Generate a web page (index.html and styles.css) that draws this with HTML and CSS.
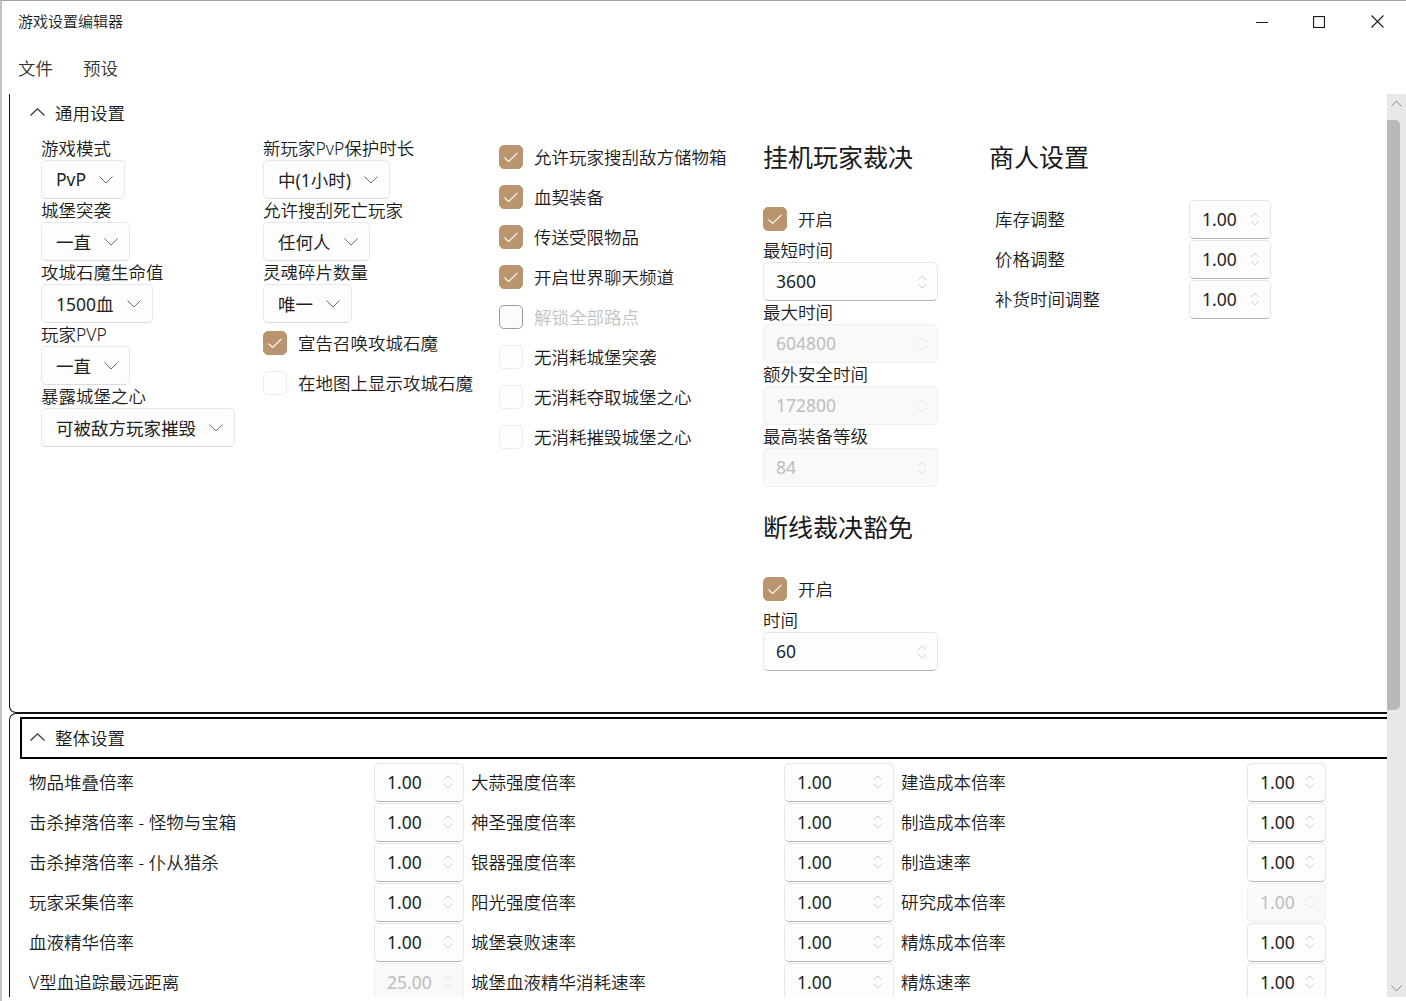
FILE: index.html
```html
<!DOCTYPE html>
<html lang="zh-CN">
<head>
<meta charset="utf-8">
<title>游戏设置编辑器</title>
<link rel="stylesheet" href="styles.css">
</head>
<body>
<div class="window">
  <header class="titlebar">
    <div class="title">游戏设置编辑器</div>
    <div class="controls">
      <div class="ctl"><svg width="12" height="12" viewBox="0 0 12 12"><path d="M0 6.5H12" stroke="#1a1a1a" stroke-width="1"/></svg></div>
      <div class="ctl"><svg width="12" height="12" viewBox="0 0 12 12"><rect x="0.5" y="0.5" width="11" height="11" fill="none" stroke="#1a1a1a" stroke-width="1.2"/></svg></div>
      <div class="ctl"><svg width="13" height="13" viewBox="0 0 13 13"><path d="M0.5 0.5L12.5 12.5M12.5 0.5L0.5 12.5" stroke="#1a1a1a" stroke-width="1.1"/></svg></div>
    </div>
  </header>
  <nav class="menubar"><span class="menu">文件</span><span class="menu">预设</span></nav>
  <div class="content">
    <div class="viewport">
      <section class="expander first">
        <div class="exp-header">
          <svg class="caret" width="15" height="8" viewBox="0 0 15 8"><path d="M0.5 7.5L7.5 0.8L14.5 7.5" fill="none" stroke="#333" stroke-width="1.2"/></svg>
          <span>通用设置</span>
        </div>
        <div class="general">
          <div class="col c1">
            <div class="label">游戏模式</div>
            <div class="combo"><span>PvP</span><svg class="chev" width="14" height="8" viewBox="0 0 14 8"><path d="M0.5 0.5L7 7L13.5 0.5" fill="none" stroke="#6b6b6b" stroke-width="1"/></svg></div>
            <div class="label">城堡突袭</div>
            <div class="combo"><span>一直</span><svg class="chev" width="14" height="8" viewBox="0 0 14 8"><path d="M0.5 0.5L7 7L13.5 0.5" fill="none" stroke="#6b6b6b" stroke-width="1"/></svg></div>
            <div class="label">攻城石魔生命值</div>
            <div class="combo"><span>1500血</span><svg class="chev" width="14" height="8" viewBox="0 0 14 8"><path d="M0.5 0.5L7 7L13.5 0.5" fill="none" stroke="#6b6b6b" stroke-width="1"/></svg></div>
            <div class="label">玩家PVP</div>
            <div class="combo"><span>一直</span><svg class="chev" width="14" height="8" viewBox="0 0 14 8"><path d="M0.5 0.5L7 7L13.5 0.5" fill="none" stroke="#6b6b6b" stroke-width="1"/></svg></div>
            <div class="label">暴露城堡之心</div>
            <div class="combo"><span>可被敌方玩家摧毁</span><svg class="chev" width="14" height="8" viewBox="0 0 14 8"><path d="M0.5 0.5L7 7L13.5 0.5" fill="none" stroke="#6b6b6b" stroke-width="1"/></svg></div>
          </div>
          <div class="col c2">
            <div class="label">新玩家PvP保护时长</div>
            <div class="combo"><span>中(1小时)</span><svg class="chev" width="14" height="8" viewBox="0 0 14 8"><path d="M0.5 0.5L7 7L13.5 0.5" fill="none" stroke="#6b6b6b" stroke-width="1"/></svg></div>
            <div class="label">允许搜刮死亡玩家</div>
            <div class="combo"><span>任何人</span><svg class="chev" width="14" height="8" viewBox="0 0 14 8"><path d="M0.5 0.5L7 7L13.5 0.5" fill="none" stroke="#6b6b6b" stroke-width="1"/></svg></div>
            <div class="label">灵魂碎片数量</div>
            <div class="combo"><span>唯一</span><svg class="chev" width="14" height="8" viewBox="0 0 14 8"><path d="M0.5 0.5L7 7L13.5 0.5" fill="none" stroke="#6b6b6b" stroke-width="1"/></svg></div>
            <div class="check"><span class="box on"><svg width="24" height="24" viewBox="0 0 24 24"><path d="M5.5 12.5L9.6 16.4L18.5 7.8" fill="none" stroke="#fff" stroke-width="1.1"/></svg></span><span>宣告召唤攻城石魔</span></div>
            <div class="check"><span class="box"></span><span>在地图上显示攻城石魔</span></div>
          </div>
          <div class="col c3">
            <div class="check"><span class="box on"><svg width="24" height="24" viewBox="0 0 24 24"><path d="M5.5 12.5L9.6 16.4L18.5 7.8" fill="none" stroke="#fff" stroke-width="1.1"/></svg></span><span>允许玩家搜刮敌方储物箱</span></div>
            <div class="check"><span class="box on"><svg width="24" height="24" viewBox="0 0 24 24"><path d="M5.5 12.5L9.6 16.4L18.5 7.8" fill="none" stroke="#fff" stroke-width="1.1"/></svg></span><span>血契装备</span></div>
            <div class="check"><span class="box on"><svg width="24" height="24" viewBox="0 0 24 24"><path d="M5.5 12.5L9.6 16.4L18.5 7.8" fill="none" stroke="#fff" stroke-width="1.1"/></svg></span><span>传送受限物品</span></div>
            <div class="check"><span class="box on"><svg width="24" height="24" viewBox="0 0 24 24"><path d="M5.5 12.5L9.6 16.4L18.5 7.8" fill="none" stroke="#fff" stroke-width="1.1"/></svg></span><span>开启世界聊天频道</span></div>
            <div class="check dim"><span class="box grey"></span><span>解锁全部路点</span></div>
            <div class="check"><span class="box"></span><span>无消耗城堡突袭</span></div>
            <div class="check"><span class="box"></span><span>无消耗夺取城堡之心</span></div>
            <div class="check"><span class="box"></span><span>无消耗摧毁城堡之心</span></div>
          </div>
          <div class="col c4">
            <h2 class="heading">挂机玩家裁决</h2>
            <div class="check"><span class="box on"><svg width="24" height="24" viewBox="0 0 24 24"><path d="M5.5 12.5L9.6 16.4L18.5 7.8" fill="none" stroke="#fff" stroke-width="1.1"/></svg></span><span>开启</span></div>
            <div class="label">最短时间</div>
            <div class="num wide"><span>3600</span><svg class="spin" width="10" height="16" viewBox="0 0 10 16"><path d="M1 6L5 2L9 6M1 10L5 14L9 10" fill="none" stroke-width="1"/></svg></div>
            <div class="label">最大时间</div>
            <div class="num wide dis"><span>604800</span><svg class="spin" width="10" height="16" viewBox="0 0 10 16"><path d="M1 6L5 2L9 6M1 10L5 14L9 10" fill="none" stroke-width="1"/></svg></div>
            <div class="label">额外安全时间</div>
            <div class="num wide dis"><span>172800</span><svg class="spin" width="10" height="16" viewBox="0 0 10 16"><path d="M1 6L5 2L9 6M1 10L5 14L9 10" fill="none" stroke-width="1"/></svg></div>
            <div class="label">最高装备等级</div>
            <div class="num wide dis"><span>84</span><svg class="spin" width="10" height="16" viewBox="0 0 10 16"><path d="M1 6L5 2L9 6M1 10L5 14L9 10" fill="none" stroke-width="1"/></svg></div>
            <h2 class="heading second">断线裁决豁免</h2>
            <div class="check"><span class="box on"><svg width="24" height="24" viewBox="0 0 24 24"><path d="M5.5 12.5L9.6 16.4L18.5 7.8" fill="none" stroke="#fff" stroke-width="1.1"/></svg></span><span>开启</span></div>
            <div class="label">时间</div>
            <div class="num wide"><span>60</span><svg class="spin" width="10" height="16" viewBox="0 0 10 16"><path d="M1 6L5 2L9 6M1 10L5 14L9 10" fill="none" stroke-width="1"/></svg></div>
          </div>
          <div class="col c5">
            <h2 class="heading">商人设置</h2>
            <div class="mrow"><span class="mlabel">库存调整</span><div class="num merch"><span>1.00</span><svg class="spin" width="10" height="16" viewBox="0 0 10 16"><path d="M1 6L5 2L9 6M1 10L5 14L9 10" fill="none" stroke-width="1"/></svg></div></div>
            <div class="mrow"><span class="mlabel">价格调整</span><div class="num merch"><span>1.00</span><svg class="spin" width="10" height="16" viewBox="0 0 10 16"><path d="M1 6L5 2L9 6M1 10L5 14L9 10" fill="none" stroke-width="1"/></svg></div></div>
            <div class="mrow"><span class="mlabel">补货时间调整</span><div class="num merch"><span>1.00</span><svg class="spin" width="10" height="16" viewBox="0 0 10 16"><path d="M1 6L5 2L9 6M1 10L5 14L9 10" fill="none" stroke-width="1"/></svg></div></div>
          </div>
        </div>
      </section>
      <section class="expander second">
        <div class="exp-header focus">
          <svg class="caret" width="15" height="8" viewBox="0 0 15 8"><path d="M0.5 7.5L7.5 0.8L14.5 7.5" fill="none" stroke="#333" stroke-width="1.2"/></svg>
          <span>整体设置</span>
        </div>
        <div class="overall">
          <span class="glabel">物品堆叠倍率</span><div class="num"><span>1.00</span><svg class="spin" width="10" height="16" viewBox="0 0 10 16"><path d="M1 6L5 2L9 6M1 10L5 14L9 10" fill="none" stroke-width="1"/></svg></div>
          <span class="glabel">大蒜强度倍率</span><div class="num"><span>1.00</span><svg class="spin" width="10" height="16" viewBox="0 0 10 16"><path d="M1 6L5 2L9 6M1 10L5 14L9 10" fill="none" stroke-width="1"/></svg></div>
          <span class="glabel">建造成本倍率</span><div class="num"><span>1.00</span><svg class="spin" width="10" height="16" viewBox="0 0 10 16"><path d="M1 6L5 2L9 6M1 10L5 14L9 10" fill="none" stroke-width="1"/></svg></div>

          <span class="glabel">击杀掉落倍率 - 怪物与宝箱</span><div class="num"><span>1.00</span><svg class="spin" width="10" height="16" viewBox="0 0 10 16"><path d="M1 6L5 2L9 6M1 10L5 14L9 10" fill="none" stroke-width="1"/></svg></div>
          <span class="glabel">神圣强度倍率</span><div class="num"><span>1.00</span><svg class="spin" width="10" height="16" viewBox="0 0 10 16"><path d="M1 6L5 2L9 6M1 10L5 14L9 10" fill="none" stroke-width="1"/></svg></div>
          <span class="glabel">制造成本倍率</span><div class="num"><span>1.00</span><svg class="spin" width="10" height="16" viewBox="0 0 10 16"><path d="M1 6L5 2L9 6M1 10L5 14L9 10" fill="none" stroke-width="1"/></svg></div>

          <span class="glabel">击杀掉落倍率 - 仆从猎杀</span><div class="num"><span>1.00</span><svg class="spin" width="10" height="16" viewBox="0 0 10 16"><path d="M1 6L5 2L9 6M1 10L5 14L9 10" fill="none" stroke-width="1"/></svg></div>
          <span class="glabel">银器强度倍率</span><div class="num"><span>1.00</span><svg class="spin" width="10" height="16" viewBox="0 0 10 16"><path d="M1 6L5 2L9 6M1 10L5 14L9 10" fill="none" stroke-width="1"/></svg></div>
          <span class="glabel">制造速率</span><div class="num"><span>1.00</span><svg class="spin" width="10" height="16" viewBox="0 0 10 16"><path d="M1 6L5 2L9 6M1 10L5 14L9 10" fill="none" stroke-width="1"/></svg></div>

          <span class="glabel">玩家采集倍率</span><div class="num"><span>1.00</span><svg class="spin" width="10" height="16" viewBox="0 0 10 16"><path d="M1 6L5 2L9 6M1 10L5 14L9 10" fill="none" stroke-width="1"/></svg></div>
          <span class="glabel">阳光强度倍率</span><div class="num"><span>1.00</span><svg class="spin" width="10" height="16" viewBox="0 0 10 16"><path d="M1 6L5 2L9 6M1 10L5 14L9 10" fill="none" stroke-width="1"/></svg></div>
          <span class="glabel">研究成本倍率</span><div class="num dis"><span>1.00</span><svg class="spin" width="10" height="16" viewBox="0 0 10 16"><path d="M1 6L5 2L9 6M1 10L5 14L9 10" fill="none" stroke-width="1"/></svg></div>

          <span class="glabel">血液精华倍率</span><div class="num"><span>1.00</span><svg class="spin" width="10" height="16" viewBox="0 0 10 16"><path d="M1 6L5 2L9 6M1 10L5 14L9 10" fill="none" stroke-width="1"/></svg></div>
          <span class="glabel">城堡衰败速率</span><div class="num"><span>1.00</span><svg class="spin" width="10" height="16" viewBox="0 0 10 16"><path d="M1 6L5 2L9 6M1 10L5 14L9 10" fill="none" stroke-width="1"/></svg></div>
          <span class="glabel">精炼成本倍率</span><div class="num"><span>1.00</span><svg class="spin" width="10" height="16" viewBox="0 0 10 16"><path d="M1 6L5 2L9 6M1 10L5 14L9 10" fill="none" stroke-width="1"/></svg></div>

          <span class="glabel">V型血追踪最远距离</span><div class="num dis"><span>25.00</span><svg class="spin" width="10" height="16" viewBox="0 0 10 16"><path d="M1 6L5 2L9 6M1 10L5 14L9 10" fill="none" stroke-width="1"/></svg></div>
          <span class="glabel">城堡血液精华消耗速率</span><div class="num"><span>1.00</span><svg class="spin" width="10" height="16" viewBox="0 0 10 16"><path d="M1 6L5 2L9 6M1 10L5 14L9 10" fill="none" stroke-width="1"/></svg></div>
          <span class="glabel">精炼速率</span><div class="num"><span>1.00</span><svg class="spin" width="10" height="16" viewBox="0 0 10 16"><path d="M1 6L5 2L9 6M1 10L5 14L9 10" fill="none" stroke-width="1"/></svg></div>
        </div>
      </section>
    </div>
    <div class="scrollbar">
      <svg class="sb-up" width="11" height="7" viewBox="0 0 11 7"><path d="M0.5 6.5L5.5 1L10.5 6.5" fill="none" stroke="#8a8a8a" stroke-width="1"/></svg>
      <div class="thumb"></div>
      <svg class="sb-down" width="11" height="7" viewBox="0 0 11 7"><path d="M0.5 0.5L5.5 6L10.5 0.5" fill="none" stroke="#8a8a8a" stroke-width="1"/></svg>
    </div>
  </div>
</div>
</body>
</html>
```

FILE: styles.css
```css
* { box-sizing: border-box; }
html, body { margin: 0; padding: 0; }
body {
  width: 1406px;
  height: 1001px;
  overflow: hidden;
  background: #ffffff;
  font-family: "Noto Sans", "Noto Sans CJK SC", sans-serif;
  font-weight: 350;
  color: #1b1b1b;
}
.window {
  height: 1001px;
  border-top: 1px solid #a3a3a3;
  border-left: 2px solid #c2c2c2;
  display: flex;
  flex-direction: column;
}
.titlebar {
  flex: none;
  height: 41px;
  display: flex;
  align-items: center;
  padding-left: 16px;
}
.title { font-size: 15px; line-height: 20px; color: #1a1a1a; padding-bottom: 2px; }
.controls { margin-left: auto; display: flex; height: 100%; }
.ctl { width: 58px; display: flex; align-items: center; justify-content: center; }
.ctl:first-child { padding-left: 2px; }

.menubar {
  flex: none;
  height: 52px;
  display: flex;
  align-items: center;
  padding-left: 16px;
}
.menu { font-size: 17.5px; line-height: 24px; color: #333; margin-right: 30px; }

.content { flex: none; height: 903px; display: flex; }
.viewport { flex: 1; overflow: hidden; padding-left: 7px; }
.scrollbar { flex: none; width: 19px; background: #e8e8e8; position: relative; }
.sb-up { position: absolute; left: 4px; top: 6px; }
.sb-down { position: absolute; left: 4px; bottom: 5px; }
.thumb {
  position: absolute;
  left: 0;
  top: 26px;
  width: 13px;
  height: 590px;
  background: #b9b9b9;
  border-radius: 0 5px 5px 0;
}

.expander { border-left: 1px solid #111; }
.expander.first {
  border-bottom: 1px solid #111;
  border-bottom-left-radius: 7px;
}
.expander.second {
  border-top: 1px solid #111;
  border-top-left-radius: 7px;
  padding-top: 3px;
}
.exp-header {
  height: 38px;
  display: flex;
  align-items: center;
  gap: 10px;
  padding-left: 20px;
  padding-bottom: 2px;
  font-size: 17.5px;
  color: #1a1a1a;
}
.exp-header.focus {
  height: 42px;
  margin-left: 10px;
  margin-right: -10px;
  border: 2px solid #000;
  padding-left: 8px;
}
.caret { flex: none; }

.general {
  display: flex;
  padding: 5px 0 41px 31px;
}
.col { display: flex; flex-direction: column; align-items: flex-start; }
.c1 { width: 222px; }
.c2 { width: 236px; }
.c3 { width: 264px; }
.c4 { width: 226px; }
.c5 { flex: 1; }

.label {
  height: 23px;
  font-size: 17.5px;
  line-height: 23px;
  color: #1b1b1b;
  white-space: nowrap;
}
.combo {
  height: 39px;
  display: inline-flex;
  align-items: center;
  gap: 13px;
  padding: 0 11px 1px 14px;
  border: 1px solid #e8e8e8;
  border-bottom-color: #dcdcdc;
  border-radius: 5px;
  background: #fdfdfd;
  font-size: 17.5px;
  font-weight: 400;
  color: #1f1f1f;
  white-space: nowrap;
}
.chev { flex: none; margin-top: 1px; }

.check {
  height: 40px;
  display: flex;
  align-items: center;
  gap: 11px;
  font-size: 17.5px;
  color: #1b1b1b;
  white-space: nowrap;
}
.check > span:last-child { margin-top: -2px; }
.check.dim { color: #c2c2c2; }
.box {
  flex: none;
  width: 24px;
  height: 24px;
  border-radius: 5px;
  border: 1px solid #ebebeb;
  background: #fdfdfd;
  display: block;
  margin-top: -1px;
}
.box.on { background: #b9946e; border-color: #b9946e; }
.box.on svg { display: block; margin: -1px; }
.box.grey { border-color: #9c9c9c; background: #fbfbfb; }

.heading {
  margin: 0;
  height: 62px;
  padding-top: 3px;
  font-size: 25px;
  line-height: 34px;
  font-weight: 400;
  color: #1a1a1a;
  white-space: nowrap;
}
.heading.second { margin-top: 20px; }

.num {
  height: 39px;
  display: flex;
  align-items: center;
  justify-content: space-between;
  padding: 0 10px 1px 12px;
  border: 1px solid #e6e6e6;
  border-bottom-color: #b4b4b4;
  border-radius: 5px;
  background: #fdfdfd;
  font-size: 17.5px;
  font-weight: 400;
  color: #1f1f1f;
}
.num .spin { flex: none; stroke: #d2d2d2; margin-top: 1px; }
.num.dis { background: #f9f9f9; border-color: #efefef; color: #bdbdbd; }
.num.dis .spin { stroke: #e2e2e2; }
.num.wide { width: 175px; }
.num.merch { width: 82px; }

.mrow {
  height: 40px;
  display: flex;
  align-items: center;
  padding-left: 6px;
}
.mlabel { width: 194px; font-size: 17.5px; color: #1b1b1b; white-space: nowrap; margin-top: -2px; }

.overall {
  display: grid;
  grid-template-columns: 352px 90px 320px 110px 353px 79px;
  grid-auto-rows: 40px;
  align-items: center;
  margin: 3px 0 0 12px;
}
.glabel {
  padding-left: 7px;
  padding-bottom: 2px;
  font-size: 17.5px;
  color: #1b1b1b;
  white-space: nowrap;
}
```
